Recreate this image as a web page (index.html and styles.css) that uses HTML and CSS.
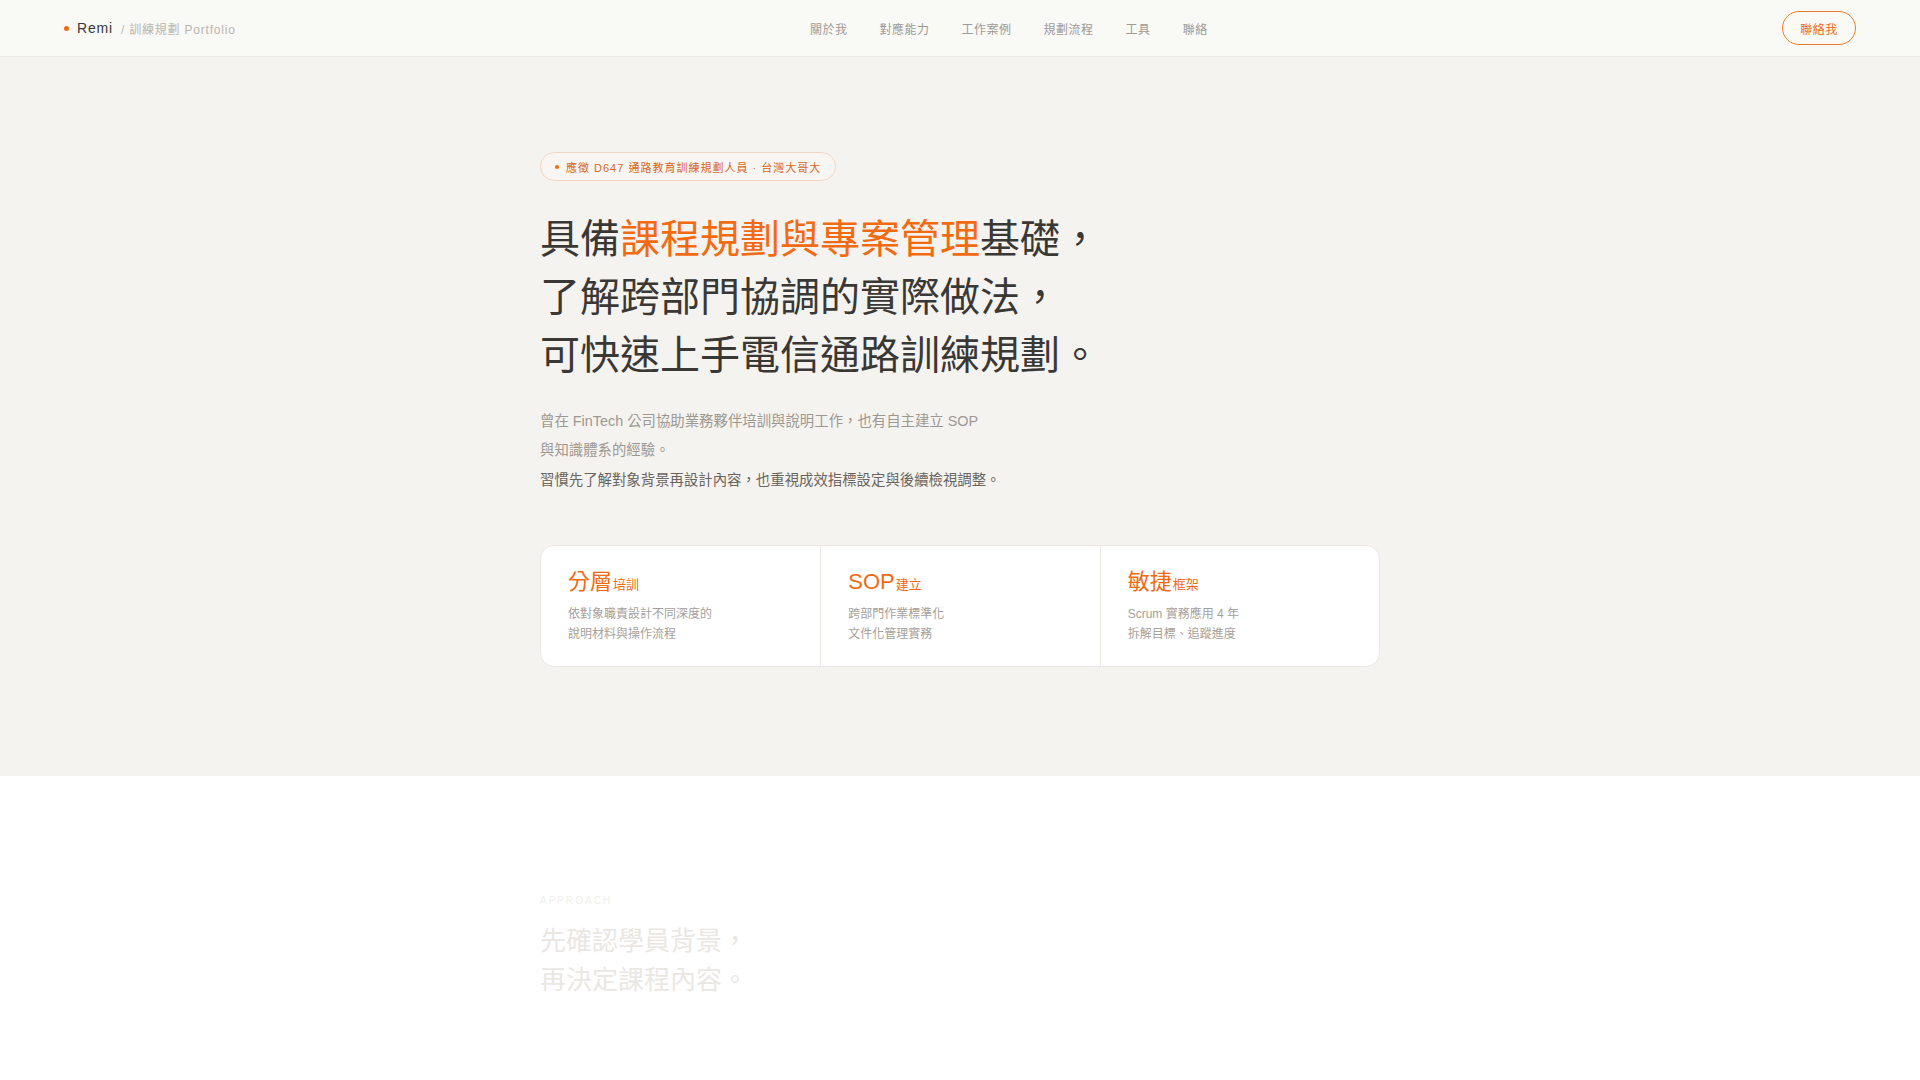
FILE: index.html
```html
<!DOCTYPE html>
<html lang="zh-Hant">
<head>
<meta charset="utf-8">
<title>Remi / 訓練規劃 Portfolio</title>
<link rel="stylesheet" href="styles.css">
</head>
<body>
<header class="nav">
  <div class="brand">
    <span class="brand-dot"></span>
    <span class="brand-name">Remi</span>
    <span class="brand-sub">/ 訓練規劃 Portfolio</span>
  </div>
  <nav class="links">
    <a href="#">關於我</a>
    <a href="#">對應能力</a>
    <a href="#">工作案例</a>
    <a href="#">規劃流程</a>
    <a href="#">工具</a>
    <a href="#">聯絡</a>
  </nav>
  <a class="cta" href="#">聯絡我</a>
</header>

<section class="hero">
  <div class="wrap">
    <div class="badge"><span class="badge-dot"></span>應徵 D647 通路教育訓練規劃人員 · 台灣大哥大</div>
    <h1 class="headline">具備<span class="accent">課程規劃與專案管理</span>基礎，<br>了解跨部門協調的實際做法，<br>可快速上手電信通路訓練規劃。</h1>
    <p class="lead">曾在 FinTech 公司協助業務夥伴培訓與說明工作，也有自主建立 SOP<br>與知識體系的經驗。</p>
    <p class="lead strong">習慣先了解對象背景再設計內容，也重視成效指標設定與後續檢視調整。</p>

    <div class="cards">
      <div class="card">
        <div class="card-title">分層<small>培訓</small></div>
        <div class="card-desc">依對象職責設計不同深度的<br>說明材料與操作流程</div>
      </div>
      <div class="card">
        <div class="card-title">SOP<small>建立</small></div>
        <div class="card-desc">跨部門作業標準化<br>文件化管理實務</div>
      </div>
      <div class="card">
        <div class="card-title">敏捷<small>框架</small></div>
        <div class="card-desc">Scrum 實務應用 4 年<br>拆解目標、追蹤進度</div>
      </div>
    </div>
  </div>
</section>

<section class="next">
  <div class="wrap">
    <div class="label">APPROACH</div>
    <h2 class="next-title">先確認學員背景，<br>再決定課程內容。</h2>
  </div>
</section>
</body>
</html>
```

FILE: styles.css
```css
* { box-sizing: border-box; }

html, body {
  margin: 0;
  padding: 0;
}

body {
  font-family: "Liberation Sans", "Noto Sans CJK TC", sans-serif;
  background: #ffffff;
  color: #3a3835;
}

a { text-decoration: none; color: inherit; }

/* ---------- nav ---------- */
.nav {
  height: 57px;
  padding: 0 64px;
  display: flex;
  align-items: center;
  justify-content: space-between;
  background: #f9f9f6;
  border-bottom: 1px solid #ebe9e4;
}

.brand {
  display: flex;
  align-items: center;
}

.brand-dot {
  width: 5px;
  height: 5px;
  border-radius: 50%;
  background: #f06a14;
  margin-right: 8px;
}

.brand-name {
  font-size: 14px;
  letter-spacing: 0.8px;
  color: #3a3835;
  margin-right: 8px;
}

.brand-sub {
  font-size: 12px;
  letter-spacing: 0.8px;
  color: #bab6b0;
}

.links {
  display: flex;
  gap: 32px;
}

.links a {
  font-size: 12px;
  letter-spacing: 0.5px;
  color: #9f9a95;
}

.cta {
  display: inline-flex;
  align-items: center;
  justify-content: center;
  width: 74px;
  height: 34px;
  border: 1px solid #f07a2c;
  border-radius: 17px;
  font-size: 12px;
  letter-spacing: 0.5px;
  color: #ec6a18;
}

/* ---------- hero ---------- */
.hero {
  background: #f5f3ef;
  padding: 95px 0 109px;
}

.wrap {
  width: 840px;
  margin: 0 auto;
}

.badge {
  display: inline-flex;
  align-items: center;
  height: 29px;
  padding: 0 14px 0 14px;
  border: 1px solid #f3d6c2;
  border-radius: 15px;
  background: rgba(255, 255, 255, 0.25);
  font-size: 11px;
  letter-spacing: 1px;
  color: #d8651f;
}

.badge-dot {
  width: 4px;
  height: 4px;
  border-radius: 50%;
  background: #f06a14;
  margin-right: 7px;
}

.headline {
  margin: 29px 0 0;
  font-size: 40px;
  font-weight: 400;
  line-height: 58px;
  color: #3a3835;
}

.accent { color: #f26a12; }

.lead {
  margin: 0;
  font-size: 14.4px;
  line-height: 29.4px;
  color: #9d9892;
}

.headline + .lead { margin-top: 23px; }

.lead.strong { color: #6a655f; }

.cards {
  margin-top: 50px;
  display: grid;
  grid-template-columns: repeat(3, 1fr);
  background: #ffffff;
  border: 1px solid #ebe8e3;
  border-radius: 14px;
  overflow: hidden;
}

.card {
  padding: 21px 27px 22px;
  border-left: 1px solid #ebe8e3;
}

.card:first-child { border-left: none; }

.card-title {
  font-size: 22px;
  line-height: 29px;
  color: #f26a12;
}

.card-title small {
  font-size: 13px;
  margin-left: 1px;
}

.card-desc {
  margin-top: 5px;
  font-size: 12px;
  line-height: 20px;
  color: #a6a09a;
}

/* ---------- next section ---------- */
.next {
  background: #ffffff;
  padding: 118px 0 80px;
}

.label {
  font-size: 10px;
  letter-spacing: 2px;
  color: #f1efec;
  line-height: 14px;
}

.next-title {
  margin: 14px 0 0;
  font-size: 26px;
  font-weight: 400;
  line-height: 39px;
  color: #eae7e3;
}
```
